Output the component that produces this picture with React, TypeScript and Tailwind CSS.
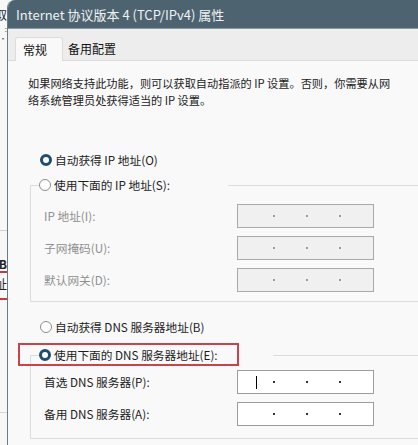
import React from "react";

const font = { fontFamily: '"Noto Sans CJK SC", "Noto Sans", sans-serif' };

type Field = { label: string; cursor?: boolean };

function Radio({ checked }: { checked?: boolean }) {
    return checked ? (
        <span className="block h-[12px] w-[12px] shrink-0 rounded-full border-[3px] border-[#1f4d70] bg-white" />
    ) : (
        <span className="block h-[12px] w-[12px] shrink-0 rounded-full border border-[#8d8d8d] bg-white" />
    );
}

function IpBox({ disabled, cursor }: { disabled?: boolean; cursor?: boolean }) {
    const dot = disabled ? "bg-[#9a9a9a]" : "bg-[#333333]";
    return (
        <div
            className={
                disabled
                    ? "relative flex h-[24px] w-[137px] items-center border border-[#a9a9a9] bg-[#f0f0f0] pl-[35px] gap-[31px]"
                    : "relative flex h-[24px] w-[137px] items-center border border-[#9c9c9c] bg-white pl-[35px] gap-[31px]"
            }
        >
            {cursor && <span className="absolute left-[18px] top-[5px] h-[13px] w-px bg-black" />}
            <span className={`h-[2px] w-[2px] ${dot}`} />
            <span className={`h-[2px] w-[2px] ${dot}`} />
            <span className={`h-[2px] w-[2px] ${dot}`} />
        </div>
    );
}

function FieldRows({ fields, disabled }: { fields: Field[]; disabled?: boolean }) {
    return (
        <div className="flex flex-col gap-[8px]">
            {fields.map((f) => (
                <div key={f.label} className="flex h-[24px] items-center">
                    <span
                        className={
                            disabled
                                ? "w-[193px] text-[11.7px] text-[#8f8f8f]"
                                : "w-[193px] text-[11.7px] text-[#1c1c1c]"
                        }
                    >
                        {f.label}
                    </span>
                    <IpBox disabled={disabled} cursor={f.cursor} />
                </div>
            ))}
        </div>
    );
}

function App() {
    const ipFields: Field[] = [{ label: "IP 地址(I):" }, { label: "子网掩码(U):" }, { label: "默认网关(D):" }];
    const dnsFields: Field[] = [{ label: "首选 DNS 服务器(P):", cursor: true }, { label: "备用 DNS 服务器(A):" }];

    return (
        <div className="flex h-[445px] w-[418px] overflow-hidden bg-[#f4f4f4] leading-none" style={font}>
            {/* window behind the dialog */}
            <div className="flex w-[7px] shrink-0 flex-col overflow-hidden bg-[#f7f7f7] text-[12px] text-[#222]">
                <div className="mt-[9px] flex justify-end whitespace-nowrap">获取</div>
                <div className="mt-[4px] flex justify-end whitespace-nowrap text-[8px] text-[#555]">:</div>
                <div className="mt-[2px] flex justify-end whitespace-nowrap text-[8px] text-[#555]">•</div>
                <div className="mt-[187px] h-px bg-[#cfcfcf]" />
                <div className="mt-[27px] flex justify-end whitespace-nowrap font-bold">B</div>
                <div className="mt-px h-[2px] bg-[#c8393f]" />
                <div className="mt-[5px] flex justify-end whitespace-nowrap">地址</div>
                <div className="mt-[8px] h-[2px] bg-[#c8393f]" />
                <div className="mt-[112px] h-px bg-[#d6d6d6]" />
            </div>

            {/* dialog */}
            <div className="flex flex-1 flex-col overflow-hidden rounded-tl-[8px] border-l border-[#6c7a83] bg-[#f9f9f9]">
                <div className="flex h-[29px] shrink-0 items-center border-b border-[#8a9aa3] bg-[#4e6370] pl-[8px] text-[13px] text-[#eef2f4]">
                    Internet 协议版本 4 (TCP/IPv4) 属性
                </div>

                <div className="flex h-[32px] shrink-0 items-end border-b border-[#d9d9d9] bg-[#ededed] pl-[7px]">
                    <div className="-mb-px flex h-[24px] w-[48px] items-center rounded-t-[3px] border border-b-0 border-[#dcdcdc] bg-[#f9f9f9] pl-[7px] text-[12px] text-[#111]">
                        常规
                    </div>
                    <div className="flex h-[22px] items-center pl-[5px] text-[12px] text-[#111]">备用配置</div>
                </div>

                <div className="flex flex-1 flex-col pl-[20px] pt-[14px] text-[11.7px] text-[#1c1c1c]">
                    <p className="text-[11.2px] leading-[17px] whitespace-nowrap">
                        如果网络支持此功能，则可以获取自动指派的 IP 设置。否则，你需要从网
                        <br />
                        络系统管理员处获得适当的 IP 设置。
                    </p>

                    <div className="mt-[41px] flex h-[20px] items-center gap-[3px] pl-[12px]">
                        <Radio checked />
                        <span>自动获得 IP 地址(O)</span>
                    </div>

                    <fieldset className="mr-[-30px] ml-[2px] mt-[5px] border border-[#dcdcdc] px-[13px] pb-[9px] pt-[9px]">
                        <legend className="ml-[-5px] flex h-[20px] items-center gap-[3px] pr-[58px]">
                            <Radio />
                            <span>使用下面的 IP 地址(S):</span>
                        </legend>
                        <FieldRows fields={ipFields} disabled />
                    </fieldset>

                    <div className="mt-[15px] flex h-[20px] items-center gap-[3px] pl-[12px]">
                        <Radio />
                        <span>自动获得 DNS 服务器地址(B)</span>
                    </div>

                    <fieldset className="mr-[-30px] ml-[2px] mt-[8px] border border-[#dcdcdc] px-[13px] pb-[12px] pt-[5px]">
                        <legend className="relative ml-[-5px] flex h-[20px] items-center gap-[3px] pr-[55px]">
                            <span className="absolute -left-[21px] -top-[2px] h-[23px] w-[221px] border-2 border-[#c8434a]" />
                            <Radio checked />
                            <span>使用下面的 DNS 服务器地址(E):</span>
                        </legend>
                        <FieldRows fields={dnsFields} />
                    </fieldset>
                </div>
            </div>
        </div>
    );
}

export default App;
